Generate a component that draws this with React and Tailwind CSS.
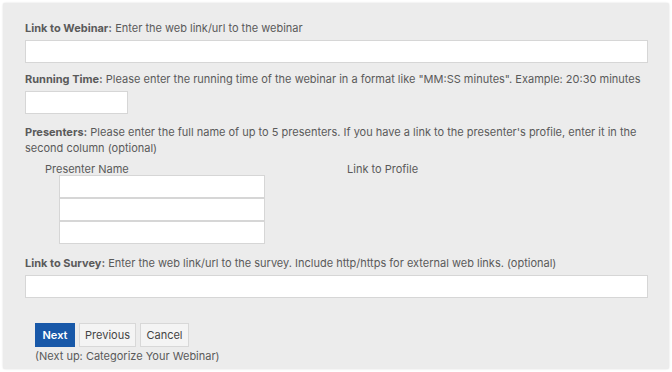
import React from 'react';

const Field = ({ className = '' }) => (
  <input
    type="text"
    className={`block h-[23px] bg-white border border-[#d6d6d6] outline-none ${className}`}
  />
);

const App = () => {
  return (
    <div className="w-[672px] h-[372px] bg-white p-[3px] font-['Inter',sans-serif] text-[11px] leading-[16px] text-[#5a5a5a]">
      <div className="h-[366px] bg-[#ececec] rounded-[2px] shadow-[0_0_2px_rgba(0,0,0,0.15)] pt-[17px] pl-[22px] pr-[21px]">
        {/* Webinar link */}
        <p>
          <span className="font-bold">Link to Webinar:</span> Enter the web link/url to the webinar
        </p>
        <Field className="w-full mt-[4px]" />

        {/* Running time */}
        <p className="mt-[8px]">
          <span className="font-bold">Running Time:</span> Please enter the running time of the webinar in a format like "MM:SS minutes". Example: 20:30 minutes
        </p>
        <Field className="w-[103px] mt-[4px]" />

        {/* Presenters */}
        <p className="mt-[10px]">
          <span className="font-bold">Presenters:</span> Please enter the full name of up to 5 presenters. If you have a link to the presenter's profile, enter it in the second column (optional)
        </p>
        <div className="flex mt-[5px] pl-[20px]">
          <div className="w-[302px]">Presenter Name</div>
          <div>Link to Profile</div>
        </div>
        <div className="pl-[34px] mt-[-2px] flex flex-col">
          <Field className="w-[206px]" />
          <Field className="w-[206px]" />
          <Field className="w-[206px]" />
        </div>

        {/* Survey link */}
        <p className="mt-[11px]">
          <span className="font-bold">Link to Survey:</span> Enter the web link/url to the survey. Include http/https for external web links. (optional)
        </p>
        <Field className="w-full mt-[4px]" />

        {/* Actions */}
        <div className="pl-[10px] mt-[25px]">
          <div className="flex gap-[4px]">
            <button className="h-[24px] w-[40px] bg-[#1858a8] text-white font-semibold border border-[#1858a8]">Next</button>
            <button className="h-[24px] w-[57px] bg-[#f4f4f4] border border-[#d8d8d8] text-[#444]">Previous</button>
            <button className="h-[24px] w-[49px] bg-[#f4f4f4] border border-[#d8d8d8] text-[#444]">Cancel</button>
          </div>
          <p className="mt-[1px]">(Next up: Categorize Your Webinar)</p>
        </div>
      </div>
    </div>
  );
};

export default App;
